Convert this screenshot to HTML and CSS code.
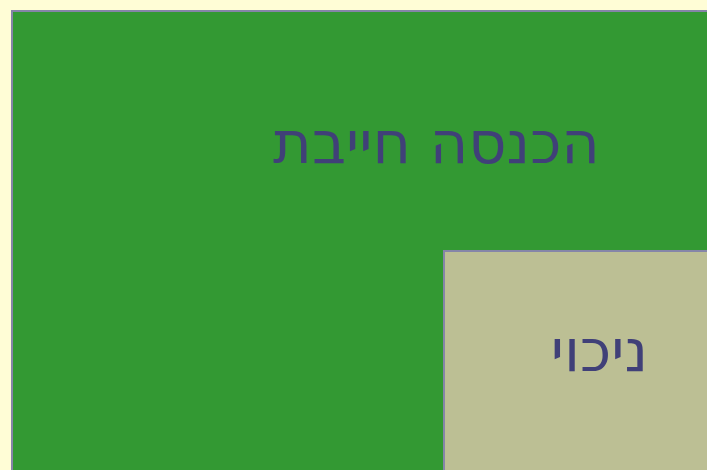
FILE: index.html
```html
<!DOCTYPE html>
<html lang="he">
<head>
<meta charset="utf-8">
<title>הכנסה חייבת</title>
<link rel="stylesheet" href="styles.css">
</head>
<body>
<div class="canvas">
  <section class="block block-income">
    <div class="block-label label-income" dir="rtl">הכנסה חייבת</div>
    <section class="block block-deduction">
      <div class="block-label label-deduction" dir="rtl">ניכוי</div>
    </section>
  </section>
</div>
</body>
</html>
```
FILE: styles.css
```css
html, body {
  margin: 0;
  padding: 0;
  background: #fffdd6;
  overflow: hidden;
  height: 100%;
}

/* the chart area: blocks continue past the right and bottom edges */
.canvas {
  box-sizing: border-box;
  height: 100%;
  padding: 10px 0 0 11px;
  display: flex;
  flex-direction: column;
}

.block {
  box-sizing: border-box;
  border: 2px solid #8585a8;
  border-right: none;
  border-bottom: none;
}

.block-income {
  flex: 1;
  background: #339933;
  display: flex;
  flex-direction: column;
}

.block-label {
  font-family: "DejaVu Sans", sans-serif;
  font-size: 59px;
  line-height: 68px;
  color: #404078;
  text-align: center;
  white-space: nowrap;
}

.label-income {
  padding: 97px 0 0 153px;
  height: 238px;
  box-sizing: border-box;
}

.block-deduction {
  flex: 1;
  margin-left: 430px;
  background: #bcbf94;
}

.label-deduction {
  padding: 65px 0 0 47px;
}
```
